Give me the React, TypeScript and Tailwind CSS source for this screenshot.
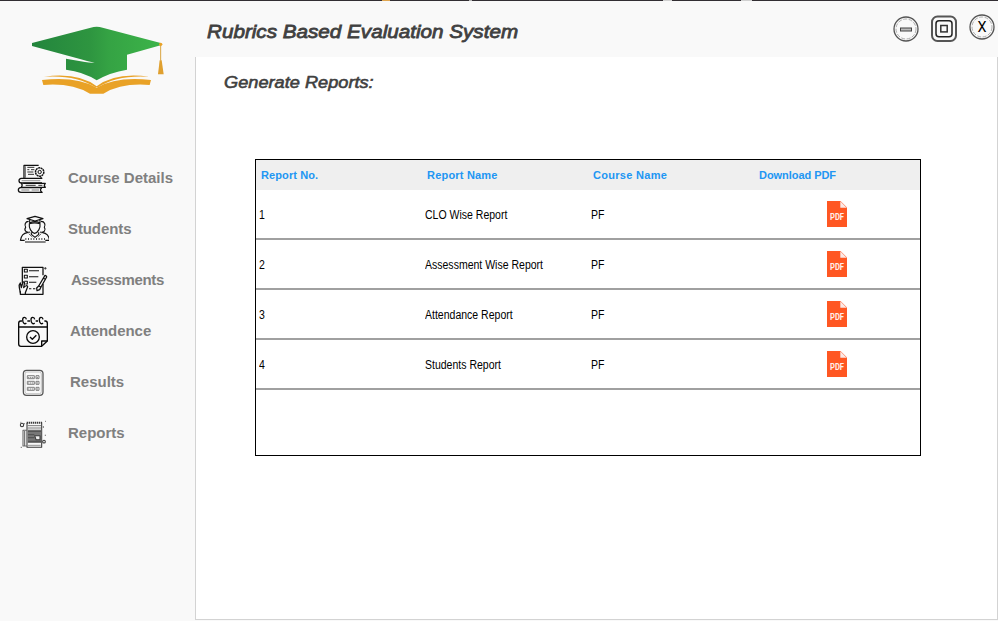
import type { ReactNode } from "react";

function Logo() {
  return (
    <svg className="ml-[30px] mt-[24px] h-[71px] w-[135px]" viewBox="90 75 405 213">
      <defs>
        <linearGradient id="cap" x1="0" x2="1" y1="0" y2="0">
          <stop offset="0" stopColor="#23853d" />
          <stop offset="0.45" stopColor="#2e9540" />
          <stop offset="0.6" stopColor="#35a344" />
          <stop offset="1" stopColor="#3cb449" />
        </linearGradient>
      </defs>
      <path d="M96 129 L272 83 Q290 78 308 83 L482 129 V136 L381 164 V209 Q330 217 290 241 Q250 215 198 209 V176 L255 186 Q270 189 284 188 Q262 184 240 177 L96 138Z" fill="url(#cap)" />
      <path d="M126 240 Q230 228 290 263 Q350 228 453 240 L449 255 Q365 248 310 281 H270 Q214 248 130 255Z" fill="#e9a227" />
      <path d="M132 230 Q235 216 290 259 Q345 216 448 230 Q350 224 294 262 H286 Q230 224 132 230Z" fill="#e9a227" />
      <path d="M482 133 V182" stroke="#d9a440" strokeWidth="3" />
      <circle cx="482" cy="133" r="5" fill="#e9a227" />
      <path d="M479 181 H485 L491 223 H474Z" fill="#e0a02f" />
    </svg>
  );
}

function NavIcon({ viewBox, children }: { viewBox: string; children: ReactNode }) {
  return (
    <svg className="h-8 w-8 shrink-0" viewBox={viewBox} fill="none" stroke="#111" strokeWidth="3.8" strokeLinejoin="round">
      {children}
    </svg>
  );
}

const courseIcon = (
  <NavIcon viewBox="51 21 96 96">
    <path d="M72 69 V31 H116" />
    <path d="M76 34 V68" stroke="#777" />
    <path d="M82 37 H103 M82 44 H88 M93 44 H103 M82 51 H100 M84 58 H102" strokeWidth="2.6" />
    <circle cx="119" cy="51" r="12.5" strokeDasharray="6 1.5" strokeWidth="4.5" />
    <circle cx="119" cy="51" r="5" strokeWidth="3" />
    <path d="M123 66 V72" />
    <path d="M127 70 H64 Q57 71 57 77 Q57 84 65 84 H126" />
    <path d="M65 77 H121" strokeWidth="2" stroke="#666" />
    <path d="M64 84 Q69 90 64 97 M70 85 H136 Q130 91 136 97 H62" />
    <path d="M77 91 H107 M115 91 H127" strokeWidth="2.6" />
    <path d="M126 98 H62 Q55 99 55 105 Q55 112 63 112 H128 M125 99 Q118 105 125 111" />
    <path d="M64 105 H88 M95 105 H117" strokeWidth="2.2" stroke="#555" />
  </NavIcon>
);

const studentIcon = (
  <NavIcon viewBox="51 174 96 96">
    <g strokeWidth="3.4">
      <path d="M81 191 L105 184 L129 191 L105 198Z M89 195 V204 Q105 196 120 204 V195" />
      <path d="M86 199 C75 199 73 210 77 217 C71 225 78 234 90 231 M123 199 C135 199 137 210 133 217 C139 225 132 234 120 231" />
      <path d="M88 206 Q104 201 120 206 C122 219 114 233 104 235 C94 233 86 219 88 206Z" />
      <path d="M94 232 V238 L105 247 L116 238 V232 M84 232 C69 235 64 241 61 257 M126 232 C141 235 146 241 149 257" />
      <path d="M61 256 H74 M136 256 H149 M75 261 H137" />
      <path d="M76 252 H138" strokeDasharray="3 5" strokeWidth="5" />
      <path d="M86 236 L97 246 M124 236 L113 246" strokeWidth="2" />
    </g>
  </NavIcon>
);

const assessmentIcon = (
  <NavIcon viewBox="51 27 96 96">
    <path d="M67 84 V37 H129 V61 M129 87 V118 H61 V109" />
    <path d="M73 43 H82 V51 H73Z M73 61 H82 V69 H73Z M73 79 H82 V87 H76" strokeWidth="3.2" />
    <path d="M87 47 H117 M87 65 H115 M87 82 H109 M87 101 H94 M99 101 H106" strokeWidth="3.2" />
    <path d="M139 63 L135 61 L116 93 L110 99 L111 107 L119 104 L123 96 L140 66Z M117 93 L123 97 M131 70 L137 74" />
    <path d="M61 113 L58 98 Q56 89 61 84 L64 98 L69 81 Q75 79 73 87 L71 98 Q80 88 83 95 L76 113 V118 M63 90 L61 84" />
    <path d="M136 36 V44 M132 40 H140" strokeWidth="2" />
  </NavIcon>
);

const attendanceIcon = (
  <NavIcon viewBox="51 180 96 96">
    <g stroke="#080808" strokeWidth="4">
      <path d="M66 198 H62 Q56 198 56 205 V267 Q56 274 63 274 H125 L142 258 V205 Q142 198 136 198 H133 M82 198 H90 M107 198 H114" />
      <path d="M56 216 H142 M125 273 V258 H142" />
      <path d="M79 193 C78 185 68 185 68 194 C68 205 74 209 79 204" />
      <path d="M104 193 C103 185 93 185 93 194 C93 205 99 209 104 204" />
      <path d="M129 193 C128 185 118 185 118 194 C118 205 124 209 129 204" />
      <circle cx="99" cy="246" r="19" />
      <path d="M90 246 L97 253 L109 241" />
    </g>
  </NavIcon>
);

const resultsIcon = (
  <NavIcon viewBox="51 33 96 96">
    <rect x="70" y="46" width="59" height="75" rx="10" stroke="#555" />
    <rect x="75" y="51" width="49" height="65" rx="6" stroke="#aaa" strokeWidth="2" />
    <g stroke="#777" strokeWidth="2.8">
      <path d="M82 62 H103 V71 H82Z M108 62 H117 V71 H108Z M82 79 H103 V88 H82Z M108 79 H117 V88 H108Z M82 97 H103 V106 H82Z M108 97 H117 V106 H108Z" />
      <path d="M84 67 H102 M110 67 H115 M84 84 H102 M110 84 H115 M84 102 H102 M110 102 H115" strokeDasharray="4 2" />
    </g>
  </NavIcon>
);

const reportsIcon = (
  <NavIcon viewBox="51 186 96 96">
    <g stroke="#3a3a3a" strokeWidth="3.2">
      <path d="M81 204 V277 H125 V202" />
      <path d="M80 203 H127" strokeDasharray="4 2" strokeWidth="6" />
      <path d="M83 212 H123 M83 219 H123" strokeWidth="2" />
      <path d="M81 226 H69 V273 H81 M74 228 V273" stroke="#666" />
      <path d="M83 224 H124 V264 H83Z" fill="#777" stroke="none" />
      <path d="M84 229 H123 M84 239 H103 M84 248 H103 M84 259 H123" strokeWidth="4" stroke="#555" />
      <path d="M104 242 H120 V254 H108Z" fill="#eee" />
      <path d="M83 271 H122" stroke="#999" />
      <circle cx="66" cy="210" r="5" />
      <circle cx="132" cy="260" r="4" />
      <path d="M61 202 H64 M73 204 V208 M135 199 H138 M130 213 V219 M136 239 V243 M62 277 H66" strokeWidth="2" />
    </g>
  </NavIcon>
);

function NavItem({ icon, label, text }: { icon: ReactNode; label: string; text: string }) {
  return (
    <a className="flex h-[51px] items-center pb-px pl-[17px]">
      {icon}
      <span className={`${text} text-[15px] font-bold leading-[18px] text-[#808080]`}>{label}</span>
    </a>
  );
}

function PdfIcon() {
  return (
    <svg className="h-[26px] w-5" viewBox="0 0 20 26">
      <path d="M0 0 H13.5 L20 6.5 V26 H0Z" fill="#ff5722" />
      <path d="M13.3 0.3 V6.7 H19.7Z" fill="#fbe9e7" />
      <text x="10" y="18.5" textAnchor="middle" textLength="14" lengthAdjust="spacingAndGlyphs" fontFamily="Roboto, sans-serif" fontSize="8.8" fontWeight="700" fill="#fff0eb">PDF</text>
    </svg>
  );
}

const rows = [
  { no: "1", name: "CLO Wise Report", course: "PF" },
  { no: "2", name: "Assessment Wise Report", course: "PF" },
  { no: "3", name: "Attendance Report", course: "PF" },
  { no: "4", name: "Students Report", course: "PF" },
];

function Cell({ children }: { children: ReactNode }) {
  return (
    <div className="pl-[3px] pt-[2px]">
      <span className="inline-block origin-left scale-x-[0.876] whitespace-nowrap">{children}</span>
    </div>
  );
}

function ReportTable() {
  return (
    <div className="ml-[59px] mt-[65px] h-[297px] w-[666px] border border-black bg-white">
      <div className="grid h-[30px] grid-cols-4 items-center bg-[#efefef] text-[11px] font-bold text-[#2196f3]">
        <div className="pl-[5px] tracking-[0.1px]">Report No.</div>
        <div className="pl-[5px] tracking-[0.2px]">Report Name</div>
        <div className="pl-[5px] tracking-[0.3px]">Course Name</div>
        <div className="pl-[5px] tracking-[-0.05px]">Download PDF</div>
      </div>
      {rows.map((row) => (
        <div key={row.no} className="grid h-[50px] grid-cols-4 items-center border-b-2 border-[#a0a0a0] text-[12px] text-black">
          <Cell>{row.no}</Cell>
          <Cell>{row.name}</Cell>
          <Cell>{row.course}</Cell>
          <div className="flex justify-center">
            <PdfIcon />
          </div>
        </div>
      ))}
    </div>
  );
}

function WindowButtons() {
  return (
    <div className="flex pr-[3px] pt-[13px]">
      <svg className="mt-[2px] h-[26px] w-[26px]" viewBox="0 0 26 26" fill="none">
        <circle cx="13" cy="13" r="12" stroke="#555" strokeWidth="1.3" />
        <circle cx="13" cy="13" r="10" stroke="#999" strokeWidth="0.8" strokeDasharray="4 1.5" />
        <rect x="7.5" y="12" width="11" height="3" fill="#bbb" stroke="#444" />
      </svg>
      <svg className="ml-[12px] mt-px h-[27px] w-[26px]" viewBox="0 0 26 27" fill="none">
        <rect x="1" y="1.5" width="24" height="24.5" rx="5.5" stroke="#555" strokeWidth="2" />
        <rect x="5" y="5.7" width="16" height="16" rx="3" stroke="#222" strokeWidth="1.5" />
        <rect x="9.8" y="10.5" width="6.4" height="6.4" stroke="#333" strokeWidth="1.5" />
      </svg>
      <svg className="ml-[12px] h-[26px] w-[26px]" viewBox="0 0 26 26" fill="none">
        <circle cx="13" cy="13" r="12" stroke="#555" strokeWidth="1.3" />
        <circle cx="13" cy="13" r="10" stroke="#999" strokeWidth="0.8" strokeDasharray="4 1.5" />
        <text x="13" y="18" textAnchor="middle" textLength="9" lengthAdjust="spacingAndGlyphs" fontFamily="Roboto, sans-serif" fontSize="14" fontWeight="400" fill="#000">X</text>
      </svg>
    </div>
  );
}

function TopStrip() {
  return (
    <div className="flex h-px shrink-0 bg-[#322e33]">
      <div className="ml-[382px] h-px w-2 bg-[#e0a651]" />
      <div className="ml-[79px] h-px w-[3px] bg-[#b5b5b5]" />
      <div className="ml-[191px] h-px w-[9px] bg-[#d0d0d0]" />
      <div className="ml-[69px] h-px w-[11px] bg-[#d0d0d0]" />
    </div>
  );
}

export default function App() {
  return (
    <div className="flex h-[621px] w-[998px] flex-col overflow-hidden bg-[#f9f9f9] font-['Liberation_Sans',Arial,sans-serif]">
      <TopStrip />
      <div className="flex grow">
        <aside className="w-[195px] shrink-0">
          <div className="h-[152px] overflow-hidden">
            <Logo />
          </div>
          <nav>
            <NavItem icon={courseIcon} label="Course Details" text="pl-[19px]" />
            <NavItem icon={studentIcon} label="Students" text="pl-[19px] tracking-[-0.1px]" />
            <NavItem icon={assessmentIcon} label="Assessments" text="pl-[22px] tracking-[-0.35px]" />
            <NavItem icon={attendanceIcon} label="Attendence" text="pl-[21px] tracking-[-0.05px]" />
            <NavItem icon={resultsIcon} label="Results" text="pl-[21px]" />
            <NavItem icon={reportsIcon} label="Reports" text="pl-[19px]" />
          </nav>
        </aside>
        <div className="flex grow flex-col">
          <header className="flex h-[56px] justify-between pl-[12px]">
            <h1 className="mt-[20px] origin-left scale-x-[1.087] self-start whitespace-nowrap text-[19px] italic leading-[22px] text-[#404040] [-webkit-text-stroke:0.8px_#404040]">
              Rubrics Based Evaluation System
            </h1>
            <WindowButtons />
          </header>
          <main className="h-[563px] border-b border-l border-r border-[#d3d3d3] bg-white">
            <h2 className="ml-[28px] mt-[15px] inline-block origin-left scale-x-[1.07] whitespace-nowrap align-top text-[17px] italic leading-[22px] text-[#404040] [-webkit-text-stroke:0.6px_#404040]">
              Generate Reports:
            </h2>
            <ReportTable />
          </main>
        </div>
      </div>
    </div>
  );
}
